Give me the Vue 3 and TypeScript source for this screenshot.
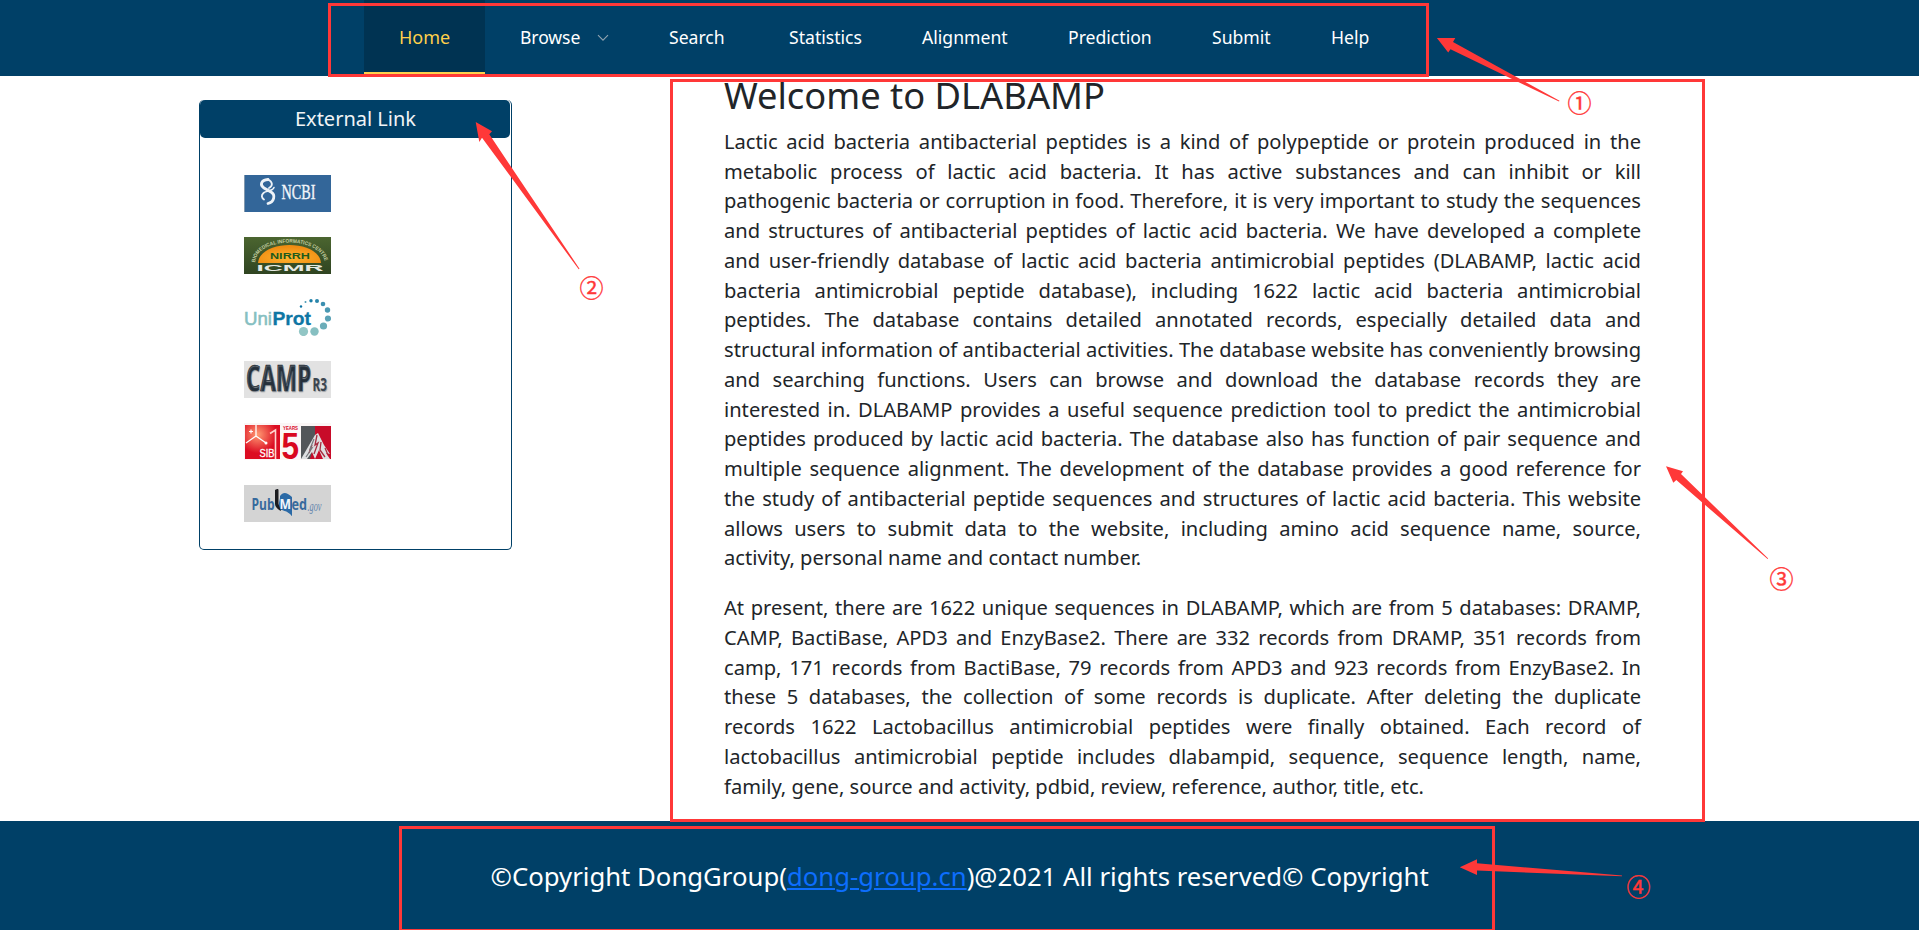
<script setup lang="ts">
interface NavItem { label: string; key: string; sub?: boolean }
interface Dot { x: number; y: number; r: number; c: string }

const nav: NavItem[] = [
  { label: 'Home', key: 'home' },
  { label: 'Browse', key: 'browse', sub: true },
  { label: 'Search', key: 'search' },
  { label: 'Statistics', key: 'statistics' },
  { label: 'Alignment', key: 'alignment' },
  { label: 'Prediction', key: 'prediction' },
  { label: 'Submit', key: 'submit' },
  { label: 'Help', key: 'help' },
]

const paragraphs: string[][] = [
  [
    'Lactic acid bacteria antibacterial peptides is a kind of polypeptide or protein produced in the',
    'metabolic process of lactic acid bacteria. It has active substances and can inhibit or kill',
    'pathogenic bacteria or corruption in food. Therefore, it is very important to study the sequences',
    'and structures of antibacterial peptides of lactic acid bacteria. We have developed a complete',
    'and user-friendly database of lactic acid bacteria antimicrobial peptides (DLABAMP, lactic acid',
    'bacteria antimicrobial peptide database), including 1622 lactic acid bacteria antimicrobial',
    'peptides. The database contains detailed annotated records, especially detailed data and',
    'structural information of antibacterial activities. The database website has conveniently browsing',
    'and searching functions. Users can browse and download the database records they are',
    'interested in. DLABAMP provides a useful sequence prediction tool to predict the antimicrobial',
    'peptides produced by lactic acid bacteria. The database also has function of pair sequence and',
    'multiple sequence alignment. The development of the database provides a good reference for',
    'the study of antibacterial peptide sequences and structures of lactic acid bacteria. This website',
    'allows users to submit data to the website, including amino acid sequence name, source,',
    'activity, personal name and contact number.',
  ],
  [
    'At present, there are 1622 unique sequences in DLABAMP, which are from 5 databases: DRAMP,',
    'CAMP, BactiBase, APD3 and EnzyBase2. There are 332 records from DRAMP, 351 records from',
    'camp, 171 records from BactiBase, 79 records from APD3 and 923 records from EnzyBase2. In',
    'these 5 databases, the collection of some records is duplicate. After deleting the duplicate',
    'records 1622 Lactobacillus antimicrobial peptides were finally obtained. Each record of',
    'lactobacillus antimicrobial peptide includes dlabampid, sequence, sequence length, name,',
    'family, gene, source and activity, pdbid, review, reference, author, title, etc.',
  ],
]

const dots: Dot[] = [
  { x: 57, y: 7.5, r: 1.2, c: '#0b74a3' },
  { x: 61.5, y: 3, r: 1, c: '#4a9ab5' },
  { x: 67, y: 1.8, r: 1.7, c: '#1b7fa9' },
  { x: 73, y: 2, r: 2, c: '#2a86ab' },
  { x: 79, y: 5, r: 2.3, c: '#3b8fb0' },
  { x: 83.5, y: 11, r: 2.7, c: '#4a98b2' },
  { x: 84, y: 19.5, r: 3.1, c: '#5aa2b6' },
  { x: 79.5, y: 27, r: 3.6, c: '#6badb9' },
  { x: 70.5, y: 32.5, r: 4.2, c: '#86bfc1' },
  { x: 59.5, y: 32.5, r: 4.6, c: '#92c6c5' },
]
</script>

<template>
  <div class="page">
    <header class="top">
      <nav class="menu">
        <a v-for="n in nav" :key="n.key" class="item" :class="n.key">
          {{ n.label }}
          <svg v-if="n.sub" class="chev" viewBox="0 0 12 8" width="12" height="8">
            <path d="M1 1.200 6 6.200 11 1.200" fill="none" stroke="#8fa3b0" stroke-width="1.100" />
          </svg>
        </a>
      </nav>
    </header>

    <main class="body">
      <aside class="links">
        <h2>External Link</h2>
        <div class="logos">
          <svg viewBox="0 0 87 37">
            <rect width="87" height="37" fill="#336699" />
            <path d="M.5 0V37" stroke="#8298ad" />
            <g fill="none" stroke="#eef3f8" stroke-linecap="round">
              <path d="M24 4.500C17 5 15.500 10 20 13L27 17C32 20 30 27 24 28.500" stroke-width="2.800" />
              <path d="M24 4.500C29 7 29 11 25 13M19.500 18C17 20 17.500 23 20 24.500" stroke-width="1.800" />
              <path d="M20 17.500C23 16 29 16 30 12.500" stroke-width="1.500" />
            </g>
            <text x="37.500" y="24" class="serif" font-size="20" fill="#f1f5fa" stroke="#f1f5fa" stroke-width=".35" textLength="34" lengthAdjust="spacingAndGlyphs">NCBI</text>
          </svg>

          <svg viewBox="0 0 87 37">
            <defs>
              <linearGradient id="leaf" x1="0" y1="0" x2="0" y2="1">
                <stop offset="0" stop-color="#4b6530" /><stop offset="1" stop-color="#2f4421" />
              </linearGradient>
              <radialGradient id="sun" cx=".5" cy=".7" r=".6">
                <stop offset="0" stop-color="#ffb52e" /><stop offset="1" stop-color="#f08c12" />
              </radialGradient>
              <path id="arc" d="M11 25.500C13 -1 77 -1 81 25.500" />
            </defs>
            <rect width="87" height="37" fill="url(#leaf)" />
            <path d="M14 26C16 2 75 2 77 26Z" fill="url(#sun)" />
            <text class="sans" font-size="5.200" font-weight="700" fill="#c3cda0">
              <textPath href="#arc" textLength="86" lengthAdjust="spacingAndGlyphs">BIOMEDICAL INFORMATICS CENTRE</textPath>
            </text>
            <text x="26" y="21.700" class="sans" font-size="8.500" font-weight="700" fill="#1f5a1c" textLength="40" lengthAdjust="spacingAndGlyphs">NIRRH</text>
            <text x="12.500" y="34.300" class="sans" font-size="8.500" font-weight="700" fill="#e6e9e2" textLength="67" lengthAdjust="spacingAndGlyphs">ICMR</text>
          </svg>

          <svg viewBox="0 0 87 37">
            <circle v-for="(d, i) in dots" :key="i" :cx="d.x" :cy="d.y" :r="d.r" :fill="d.c" />
            <text x="0" y="25.500" class="sans" font-size="19" fill="#86bfc1" stroke="#86bfc1" stroke-width=".6" textLength="28" lengthAdjust="spacingAndGlyphs">Uni</text>
            <text x="28.500" y="25.500" class="sans" font-size="19" font-weight="700" fill="#0e76a4" stroke="#0e76a4" stroke-width=".3" textLength="38.500" lengthAdjust="spacingAndGlyphs">Prot</text>
          </svg>

          <svg viewBox="0 0 87 37">
            <rect width="87" height="37" fill="#e2e2e2" />
            <g class="noto" font-weight="700">
              <text x="2" y="30" class="shade" font-size="36" fill="#25303b" stroke="#25303b" stroke-width=".7" textLength="65" lengthAdjust="spacingAndGlyphs">CAMP</text>
              <text x="68.500" y="30" class="shade" font-size="17" fill="#3b454f" textLength="14.500" lengthAdjust="spacingAndGlyphs">R3</text>
            </g>
          </svg>

          <svg viewBox="0 0 87 37">
            <defs>
              <radialGradient id="glow" cx=".36" cy=".28" r=".55">
                <stop offset="0" stop-color="#ff9b73" /><stop offset="1" stop-color="#dc0c22" />
              </radialGradient>
            </defs>
            <rect width="87" height="37" fill="#fbf6f6" />
            <rect x="1" y="2" width="35" height="34" fill="url(#glow)" />
            <path d="M12 2v11L2 20M12 13l10 7" fill="none" stroke="#fff" stroke-width="1.300" />
            <path d="M5 8.500h4M7 6.500v4" stroke="#fff" stroke-width="1.200" />
            <circle cx="22" cy="20" r="1.500" fill="#fff" />
            <path d="M26 10.500 31.500 7v29" fill="none" stroke="#ffd5cf" stroke-width="1.600" />
            <text x="15.500" y="33.500" class="sans" font-size="11.500" fill="#fff" stroke="#fff" stroke-width=".3" textLength="15" lengthAdjust="spacingAndGlyphs">SIB</text>
            <text x="37.500" y="35.500" class="sans" font-size="37" font-weight="700" fill="#d9061e" textLength="17.500" lengthAdjust="spacingAndGlyphs">5</text>
            <text x="39" y="6.500" class="sans" font-size="6" font-weight="700" fill="#d9061e" textLength="15" lengthAdjust="spacingAndGlyphs">YEARS</text>
            <rect x="57" y="3" width="30" height="33" fill="#53565a" />
            <path d="M71 3H87V36H66L71 18Z" fill="#c80b29" />
            <path d="M57 36 64 24 71 12 74 10 80 22 86 31 82 30 86 36 79 36 75 27 71 36 68 29 63 36Z" fill="#dfdfe1" />
            <path d="M73 12 71 22 74 20 70 31M77 19l-1 8 5 7M68 22l-3 8M81 25l3 7" fill="none" stroke="#a62b3e" stroke-width="1.300" />
            <path d="M70 16 66 26 68 25 62 34" fill="none" stroke="#77797d" stroke-width="1.200" />
          </svg>

          <svg viewBox="0 0 87 37">
            <rect width="87" height="37" fill="#d4d4d4" />
            <path d="M36 11C39 7 42 6.500 48 12V31C44 25 40 25 36 25Z" fill="#2b6aa6" />
            <path d="M36 13C42 10 48 10 48 17V31C43 25 38 26 34 23Z" fill="#2b6aa6" />
            <path d="M31 5C34 3.500 34.500 4 34.500 5.500V19L37 26C34.500 25 31 22 31 19Z" fill="#1b1c20" />
            <g class="noto" font-weight="700">
              <text x="7.500" y="25" font-size="16" fill="#376a9d" textLength="23" lengthAdjust="spacingAndGlyphs">Pub</text>
              <text x="35.500" y="24" font-size="14" fill="#f1f6fb" textLength="11.500" lengthAdjust="spacingAndGlyphs">M</text>
              <text x="47.500" y="25" font-size="16" fill="#376a9d" textLength="15.500" lengthAdjust="spacingAndGlyphs">ed</text>
            </g>
            <text x="63.500" y="25.500" class="serif" font-size="15" font-style="italic" fill="#6385ad" textLength="14" lengthAdjust="spacingAndGlyphs">.gov</text>
          </svg>
        </div>
      </aside>

      <article class="text">
        <h1>Welcome to DLABAMP</h1>
        <p v-for="(p, i) in paragraphs" :key="i">
          <span v-for="line in p" :key="line" class="line">{{ line + ' ' }}</span>
        </p>
      </article>
    </main>

    <footer class="foot">
      <span>©Copyright DongGroup(</span><a>dong-group.cn</a><span>)@2021 All rights reserved© Copyright</span>
    </footer>

    <svg class="marks" viewBox="0 0 1919 930" width="1919" height="930">
      <g fill="none" stroke="#ff3838" stroke-width="3">
        <rect x="329.500" y="4.500" width="1098" height="71" />
        <rect x="671.500" y="80.500" width="1032" height="740" />
        <rect x="400.500" y="827.500" width="1093" height="103" />
      </g>
      <g fill="#ff3838">
        <path d="M1436.900 38 1455.300 38 1453 42 1559.500 100.800 1559 101.600 1450.500 49.300 1448.200 52.500Z" />
        <path d="M475.700 122 492 131.300 489.300 134.300 579.500 268.700 578.700 269.300 482 137.700 479.300 142Z" />
        <path d="M1666 466.300 1683 471.300 1681 474 1768.200 558.500 1767.600 559.100 1676.300 480 1673.300 482.700Z" />
        <path d="M1459.800 867.300 1477 859.300V863.300L1622 875.500V876.300L1477 870.600V875Z" />
      </g>
      <g class="num" fill="#ff3838" stroke="#ff3838" stroke-width=".4" font-size="24" text-anchor="middle">
        <text x="1579.600" y="111.500">①</text>
        <text x="591.600" y="296.700">②</text>
        <text x="1781.500" y="587.700">③</text>
        <text x="1638.400" y="896">④</text>
      </g>
    </svg>
  </div>
</template>

<style>
body {
  margin: 0;
  overflow: hidden;
}
</style>

<style scoped>
.page {
  position: relative;
  display: flex;
  flex-direction: column;
  height: 930px;
  overflow: hidden;
  background: #fff;
  color: #212529;
  font-family: "Noto Sans", "Open Sans", sans-serif;
}

.top {
  height: 76px;
  background: #004067;
}
.menu {
  display: flex;
  height: 74px;
  padding-left: 364px;
}
.item {
  box-sizing: border-box;
  height: 74px;
  padding-left: 35px;
  color: #fff;
  font-size: 17.600px;
  line-height: 75px;
  white-space: nowrap;
}
.home {
  width: 121px;
  border-bottom: 2px solid #ffd04b;
  background: #003352;
  color: #ffd04b;
  font-size: 18px;
}
.browse { width: 149px; letter-spacing: -0.1px; }
.search { width: 120px; }
.statistics { width: 133px; }
.alignment { width: 146px; }
.prediction { width: 144px; }
.submit { width: 119px; }
.help { width: 110px; }
.chev {
  margin-left: 12px;
  vertical-align: 2px;
}

.body {
  display: flex;
  height: 745px;
}
.links {
  box-sizing: border-box;
  width: 313px;
  height: 450px;
  margin: 24px 0 0 199px;
  border: 1px solid #004067;
  border-top: 0;
  border-radius: 5px;
}
.links h2 {
  width: 310px;
  height: 38px;
  margin: 0;
  border-radius: 5px;
  background: #004067;
  color: #f1f4f6;
  font-size: 20px;
  font-weight: 400;
  line-height: 38px;
  text-align: center;
  text-indent: 1px;
}
.logos {
  display: flex;
  flex-direction: column;
  gap: 25px;
  padding: 37px 0 27px 44px;
}
.logos svg {
  display: block;
  width: 87px;
  height: 37px;
}
.serif { font-family: "Liberation Serif", serif; }
.sans { font-family: "Liberation Sans", sans-serif; }
.noto { font-family: "Open Sans", "Noto Sans", sans-serif; }
.shade { text-shadow: 1px 1px 1px #9fa3a7; }

.text {
  width: 917px;
  margin-left: 212px;
}
.text h1 {
  margin: 0 0 13px;
  font-size: 36.300px;
  font-weight: 400;
  line-height: 38px;
}
.text p {
  margin: 0 0 20.200px;
  font-size: 20.120px;
  line-height: 29.740px;
}
.line {
  display: block;
  text-align: justify;
  text-align-last: justify;
}
.line:last-child { text-align-last: left; }

.foot {
  height: 109px;
  padding-left: 490.500px;
  background: #004067;
  color: #fff;
  font-size: 25.730px;
  line-height: 111px;
  white-space: nowrap;
}
.foot a {
  color: #0d6efd;
  text-decoration: underline;
  text-decoration-thickness: 2px;
  text-underline-offset: 2px;
  text-decoration-skip-ink: auto;
}

.marks {
  position: absolute;
  top: 0;
  left: 0;
  pointer-events: none;
}
.num { font-family: "Noto Sans CJK SC", sans-serif; }
</style>
